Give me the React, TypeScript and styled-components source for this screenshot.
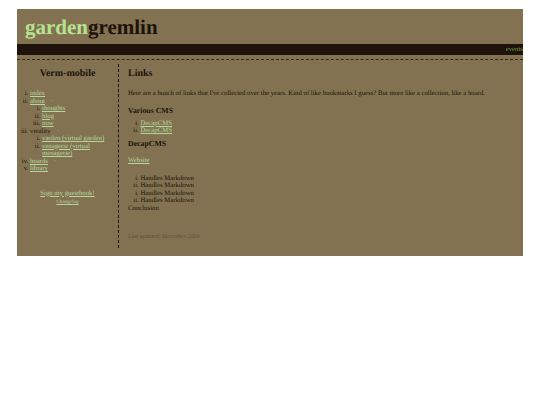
import React from "react";
import styled, { createGlobalStyle } from "styled-components";

const GlobalStyle = createGlobalStyle`
    html, body {
        margin: 0;
        padding: 0;
        background: #fff;
    }
    body {
        font-family: "Liberation Serif", "Times New Roman", serif;
        font-size: 6.75px;
        line-height: 7.5px;
        color: #1e130a;
        text-rendering: geometricPrecision;
    }
    a {
        color: #b5d89a;
    }
`;

const Page = styled.div`
    width: 506px;
    height: 247px;
    margin: 9px 0 0 17px;
    background: #827252;
    overflow: hidden;
`;

const Header = styled.header`
    height: 35px;
    padding-left: 8px;
    box-sizing: border-box;
`;

const Logo = styled.h1`
    margin: 0;
    padding-top: 6px;
    font-size: 21px;
    line-height: 24px;
    font-weight: bold;
    color: #1e130a;
`;

const LogoAccent = styled.span`
    color: #b5e38f;
`;

const Ticker = styled.div`
    height: 11px;
    background: #1e130a;
    color: #6f9a55;
    line-height: 11px;
    text-align: right;
    white-space: nowrap;
`;

const Divider = styled.div`
    margin-top: 4px;
    border-top: 1px dashed #1e130a;
    opacity: 0.75;
`;

const Columns = styled.div`
    display: flex;
    height: 184px;
    margin-top: 4px;
`;

const Sidebar = styled.nav`
    width: 102px;
    box-sizing: border-box;
    border-right: 1px dashed #1e130a;
    padding-top: 4px;
`;

const SidebarTitle = styled.h2`
    margin: 0 0 10px;
    font-size: 10px;
    line-height: 12px;
    text-align: center;
`;

const NavList = styled.ol`
    list-style: lower-roman;
    margin: 0;
    padding: 0 0 0 13px;
`;

const SubList = styled.ol`
    list-style: lower-roman;
    margin: 0;
    padding: 0 8px 0 12px;
`;

const Plus = styled.span`
    color: #94866a;
    margin-left: 5px;
`;

const Guestbook = styled.div`
    margin-top: 17px;
    text-align: center;
`;

const GuestbookLink = styled.a`
    display: block;
`;

const Changelog = styled.a`
    display: block;
    margin-top: 2px;
    font-size: 5.1px;
`;

const Main = styled.main`
    flex: 1;
    padding: 4px 0 0 9px;
`;

const Title = styled.h2`
    margin: 0 0 10px;
    font-size: 10px;
    line-height: 12px;
`;

const Intro = styled.p`
    margin: 0 0 8px;
`;

const SectionTitle = styled.h3`
    margin: 0 0 5px;
    font-size: 7.8px;
    line-height: 9px;
`;

const LinkList = styled.ol<{ $flush?: boolean }>`
    list-style: lower-roman;
    margin: 0 0 ${(props) => (props.$flush ? 0 : 4)}px;
    padding: 0 0 0 12.5px;
`;

const Website = styled.p`
    margin: 9px 0 10.5px;
`;

const Updated = styled.p`
    margin: 22px 0 0;
    font-style: italic;
    color: #5c5038;
    font-size: 5.9px;
`;

export default function App() {
    return (
        <>
            <GlobalStyle />
            <Page>
                <Header>
                    <Logo>
                        <LogoAccent>garden</LogoAccent>gremlin
                    </Logo>
                </Header>
                <Ticker>events</Ticker>
                <Divider />
                <Columns>
                    <Sidebar>
                        <SidebarTitle>Verm-mobile</SidebarTitle>
                        <NavList>
                            <li><a href="#">index</a></li>
                            <li>
                                <a href="#">about</a><Plus>+</Plus>
                                <SubList>
                                    <li><a href="#">thoughts</a></li>
                                    <li><a href="#">blog</a></li>
                                    <li><a href="#">now</a></li>
                                </SubList>
                            </li>
                            <li>
                                vreality<Plus>+</Plus>
                                <SubList>
                                    <li><a href="#">varden (virtual garden)</a></li>
                                    <li><a href="#">venagerie (virtual menagerie)</a></li>
                                </SubList>
                            </li>
                            <li><a href="#">hoards</a><Plus>+</Plus></li>
                            <li><a href="#">library</a></li>
                        </NavList>
                        <Guestbook>
                            <GuestbookLink href="#">Sign my guestbook!</GuestbookLink>
                            <Changelog href="#">Changelog</Changelog>
                        </Guestbook>
                    </Sidebar>
                    <Main>
                        <Title>Links</Title>
                        <Intro>Here are a bunch of links that I've collected over the years. Kind of like bookmarks I guess? But more like a collection, like a hoard.</Intro>
                        <SectionTitle>Various CMS</SectionTitle>
                        <LinkList>
                            <li><a href="#">DecapCMS</a></li>
                            <li><a href="#">DecapCMS</a></li>
                        </LinkList>
                        <SectionTitle>DecapCMS</SectionTitle>
                        <Website><a href="#">Website</a></Website>
                        <LinkList $flush>
                            <li>Handles Markdown</li>
                            <li>Handles Markdown</li>
                        </LinkList>
                        <LinkList $flush>
                            <li>Handles Markdown</li>
                            <li>Handles Markdown</li>
                        </LinkList>
                        <div>Conclusion</div>
                        <Updated>Last updated: December 2024</Updated>
                    </Main>
                </Columns>
            </Page>
        </>
    );
}
